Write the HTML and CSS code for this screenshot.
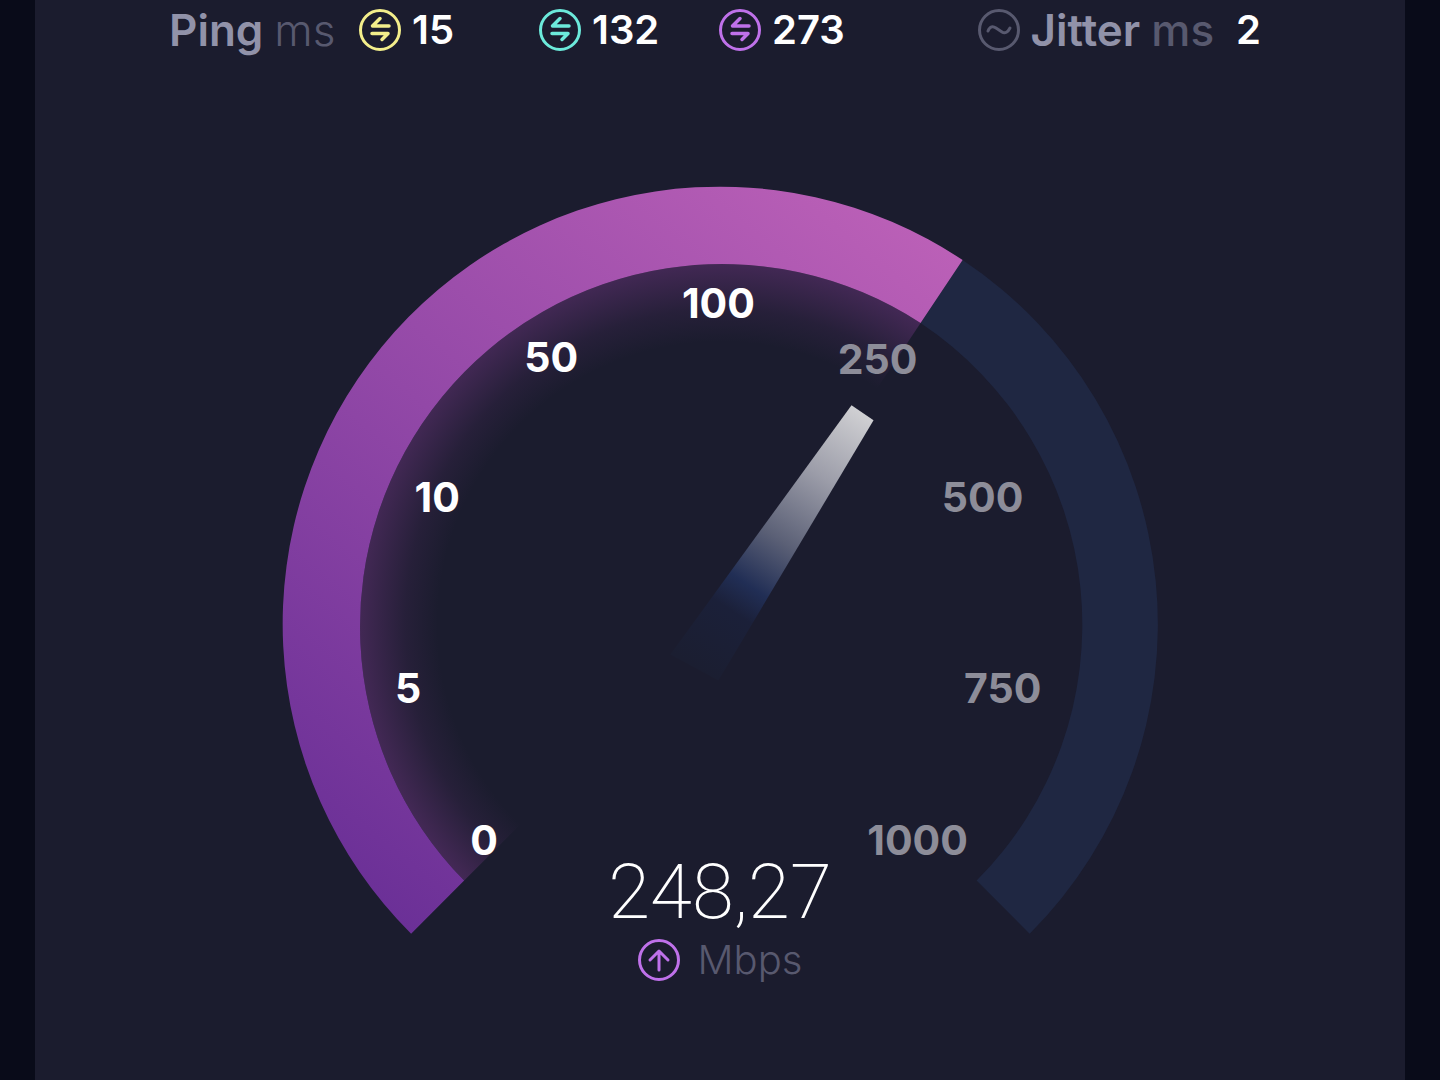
FILE: index.html
```html
<!DOCTYPE html>
<html lang="en">
<head>
  <meta charset="UTF-8">
  <title>Speed Test</title>
  <meta name="viewport" content="width=device-width, initial-scale=1.0">
  <link rel="stylesheet" href="styles.css">
</head>
<body>

  <main class="panel">

    <header class="stats">
      <div class="stat label">
        <span class="name">Ping</span>
        <span class="unit">ms</span>
      </div>
      <div class="stat idle">
        <svg class="icon" viewBox="0 0 42 42"><use href="#swap"/></svg>
        <span class="value">15</span>
      </div>
      <div class="stat download">
        <svg class="icon" viewBox="0 0 42 42"><use href="#swap"/></svg>
        <span class="value">132</span>
      </div>
      <div class="stat upload">
        <svg class="icon" viewBox="0 0 42 42"><use href="#swap"/></svg>
        <span class="value">273</span>
      </div>
      <div class="stat jitter">
        <svg class="icon" viewBox="0 0 42 42">
          <circle cx="21" cy="21" r="19.5"/>
          <path d="M10 22c2-5 5-5 8-3l6 4c3 2 6 0 8-4"/>
        </svg>
        <span class="name">Jitter</span>
        <span class="unit">ms</span>
        <span class="value">2</span>
      </div>
    </header>

    <section class="gauge">
      <!-- origin is the centre of the dial -->
      <svg class="dial" viewBox="-438 -438 876 748">
        <defs>
          <symbol id="swap" viewBox="0 0 42 42">
            <circle cx="21" cy="21" r="19.5"/>
            <path stroke-width="3.5" d="M30 17H13.500L21 9.500M13 24.500H29L23 30.500"/>
          </symbol>
          <linearGradient id="fill" gradientUnits="userSpaceOnUse" x1="-309" y1="309" x2="242" y2="-364">
            <stop offset="0" stop-color="#6b3097"/>
            <stop offset="0.48" stop-color="#9248a7"/>
            <stop offset="1" stop-color="#bb60b7"/>
          </linearGradient>
          <radialGradient id="glow" gradientUnits="userSpaceOnUse" cx="0" cy="0" r="362">
            <stop offset="0.78" stop-color="#7b3a8c" stop-opacity="0"/>
            <stop offset="0.87" stop-color="#7b3a8c" stop-opacity="0.12"/>
            <stop offset="1" stop-color="#7b3a8c" stop-opacity="0.42"/>
          </radialGradient>
          <linearGradient id="needle" gradientUnits="userSpaceOnUse" x1="142" y1="-212" x2="-26" y2="42">
            <stop offset="0" stop-color="#d0d0d3"/>
            <stop offset="0.25" stop-color="#9c9da9"/>
            <stop offset="0.5" stop-color="#5b6076"/>
            <stop offset="0.68" stop-color="#212e55"/>
            <stop offset="0.78" stop-color="#1b2039"/>
            <stop offset="1" stop-color="#1b1e31"/>
          </linearGradient>
        </defs>

        <path class="track" d="M242-364A437 437 0 0 1 309 309L256 256A362 362 0 0 0 200-301Z"/>
        <path fill="url(#glow)" d="M0 0L-256 256A362 362 0 0 1 200-301Z"/>
        <path fill="url(#fill)" d="M-309 309A437 437 0 0 1 242-364L200-301A362 362 0 0 0-256 256Z"/>
        <path fill="url(#needle)" d="M131-219L153-204L-2 56L-50 30Z"/>

        <g class="marks">
          <text x="-236" y="230">0</text>
          <text x="-312" y="79">5</text>
          <text x="-283" y="-112">10</text>
          <text x="-169" y="-252">50</text>
          <text x="-2" y="-306">100</text>
        </g>
        <g class="marks ahead">
          <text x="157" y="-250">250</text>
          <text x="262" y="-112">500</text>
          <text x="282" y="79">750</text>
          <text x="197" y="230">1000</text>
        </g>
      </svg>

      <div class="reading">
        <div class="speed">248,27</div>
        <div class="speed-unit">
          <svg class="icon" viewBox="0 0 42 42">
            <circle cx="21" cy="21" r="19.500"/>
            <path d="M21 31V13M12 21L21 12L30 21"/>
          </svg>
          <span>Mbps</span>
        </div>
      </div>
    </section>

  </main>

</body>
</html>
```
FILE: styles.css
```css
* {
  box-sizing: border-box;
}

body {
  margin: 0;
  background: #090b19;
  color: #fff;
  font-family: Inter, "Liberation Sans", sans-serif;
}

.panel {
  min-height: 100vh;
  margin: 0 35px;
  background: #1b1c2e;
}

/* top row */
.stats {
  display: grid;
  grid-template-columns: 190px 180px 180px 1fr auto;
  height: 60px;
  padding: 0 144px 0 134px;
}

.stat {
  display: flex;
  align-items: center;
  gap: 11px;
  font-size: 40px;
  line-height: 60px;
}

.icon {
  width: 42px;
  height: 42px;
  flex: none;
  fill: none;
  stroke: currentColor;
  stroke-width: 3;
  stroke-linecap: round;
  stroke-linejoin: round;
}

.name {
  color: #9192a9;
  font-size: 44px;
  font-weight: 600;
}

.unit {
  color: #58596f;
  font-size: 44px;
  font-weight: 300;
}

.value {
  color: #fff;
  font-weight: 600;
}

.idle {
  color: #f3ee8b;
}

.download {
  color: #6ceadb;
}

.upload {
  color: #bf71ea;
}

.jitter {
  color: #58596f;
}

.jitter .unit {
  font-weight: 500;
}

.jitter .value {
  margin-left: 11px;
}

/* gauge */
.gauge {
  position: relative;
  width: 64%;
  margin: 126px auto 0;
}

.dial {
  display: block;
  width: 100%;
}

.track {
  fill: #1f2742;
}

.marks {
  fill: #fff;
  font-size: 41px;
  font-weight: 700;
  text-anchor: middle;
}

.ahead {
  fill: #8d8d99;
}

.reading {
  position: absolute;
  left: 0;
  right: 0;
  bottom: -48px;
  text-align: center;
}

.speed {
  font-family: Roboto, "Liberation Sans", sans-serif;
  font-size: 76px;
  font-weight: 200;
  line-height: 90px;
}

.speed-unit {
  display: flex;
  align-items: center;
  justify-content: center;
  gap: 18px;
  color: #58596f;
  font-size: 40px;
  font-weight: 300;
  line-height: 46px;
}

.speed-unit .icon {
  color: #bf71ea;
}
```
